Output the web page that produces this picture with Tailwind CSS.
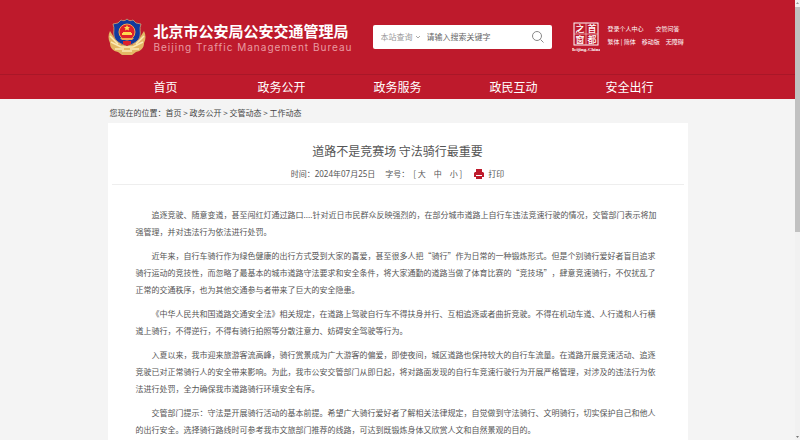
<!DOCTYPE html>
<html lang="zh-CN">
<head>
  <meta charset="UTF-8" />
  <meta name="viewport" content="width=device-width, initial-scale=1.0"/>
  <title>道路不是竞赛场 守法骑行最重要</title>
  <script src="https://cdn.jsdelivr.net/npm/@tailwindcss/browser@4"></script>
</head>
<body class="flex h-screen overflow-hidden bg-[#f4f4f4] font-['Noto_Sans_CJK_SC',sans-serif] text-[8px] text-[#555] [text-spacing-trim:space-all]">

  <div class="h-full min-w-0 flex-1 overflow-hidden">
    <header class="bg-[#be1a2c] text-white">
      <div class="mx-auto flex h-[74px] max-w-[580px] items-center">
        <a href="#" class="flex items-center gap-2" aria-label="北京市公安局公安交通管理局">
          <svg class="h-[38px] w-[38px]" viewBox="0 0 38 38">
            <path d="M2 13c-2 4-2 8 0 12 0 5 3 8 8 9l4 3h10l4-3c5-1 8-4 8-9 2-4 2-8 0-12l-5 8-7 6H14l-7-6z" fill="#e3b865"/>
            <path d="M2 18l8 8M3 24l10 5M7 31l9 0M36 18l-8 8M35 24l-10 5M31 31l-9 0" stroke="#fbe9b4" stroke-width="1.5" fill="none"/>
            <path d="M19 1c2 2 4 2 6 1l3 3 5 1c-2 5 0 8-1 12-1 5-6 8-13 10C12 26 7 23 6 18c-1-4 1-7-1-12l5-1 3-3c2 1 4 1 6-1z" fill="#123a9e" stroke="#d9b87a" stroke-width=".7"/>
            <circle cx="19" cy="14" r="8" fill="#e0202a" stroke="#f0a850"/>
            <path d="M19 7l1 2h2l-1.500 1.500.5 2-2-1-2 1 .5-2L16 9h2z" fill="#ffd94f"/>
            <path d="M15 14h8v1h1v2H14v-2h1z" fill="#ffd94f"/>
            <path d="M12 20h14l-2 2H14z" fill="#f0a850"/>
            <path d="M15 23h8v3l-4 2-4-2z" fill="#e0202a"/>
            <path d="M13 29h12M14 33h10" stroke="#fbe9b4" stroke-width="1.500"/>
          </svg>
          <span class="block whitespace-nowrap">
            <span class="block text-[15px] leading-5 font-bold">北京市公安局公安交通管理局</span>
            <span class="block font-['Inter',sans-serif] text-[10px] leading-3 tracking-[1px] text-[#e99ba2]">Beijing Traffic Management Bureau</span>
          </span>
        </a>

        <form class="mr-5 ml-auto flex h-6 w-[179px] items-center rounded-xs bg-white px-2 text-[#999]">
          <select aria-label="查询范围" class="h-4 w-9 appearance-none text-[8px]"><option>本站查询</option></select>
          <svg class="-ml-0.5 h-1 w-1.5" viewBox="0 0 6 4" fill="none" stroke="#aaa"><path d="M1 1l2 2 2-2"/></svg>
          <input type="text" aria-label="关键字" placeholder="请输入搜索关键字" class="ml-1.5 min-w-0 flex-1 text-[8px] text-[#666] placeholder:text-[#666]"/>
          <button type="button" aria-label="搜索">
            <svg class="size-3" viewBox="0 0 12 12" fill="none" stroke="#888"><circle cx="5" cy="5" r="4.500"/><path d="M8.500 8.500l3 3"/></svg>
          </button>
        </form>

        <a href="#" class="block" aria-label="首都之窗">
          <svg class="h-[30px] w-7" viewBox="0 0 28 30">
            <rect x="2" y="1" width="24" height="22" fill="none" stroke="#fff"/>
            <path d="M14 1v22M2 12h24" stroke="#f3c3c7" stroke-width=".7"/>
            <g fill="#fff" font-family="Noto Sans CJK SC" font-size="9" font-weight="500" text-anchor="middle">
              <text x="8" y="10">之</text><text x="20" y="10">首</text>
              <text x="8" y="21">窗</text><text x="20" y="21">都</text>
            </g>
            <text x="14" y="28.500" fill="#fff" font-family="Liberation Serif" font-size="5" font-weight="700" text-anchor="middle">Beijing-China</text>
          </svg>
        </a>

        <div class="mr-1 ml-2 w-[76px] pb-1 text-[6px] leading-[13px] whitespace-nowrap">
          <div class="flex gap-3"><a href="#">登录个人中心</a><a href="#">交管问答</a></div>
          <div class="flex gap-1.5"><span><a href="#">繁体</a> | <a href="#">简体</a></span><a href="#">移动版</a><a href="#">无障碍</a></div>
        </div>
      </div>
      <nav class="border-t border-[#a91728]">
        <div class="mx-auto grid h-6 max-w-[580px] grid-cols-5 items-center text-center text-xs">
          <a href="#">首页</a>
          <a href="#">政务公开</a>
          <a href="#">政务服务</a>
          <a href="#">政民互动</a>
          <a href="#">安全出行</a>
        </div>
      </nav>
    </header>

    <main class="mx-auto max-w-[580px]">
      <div class="px-0.5 pt-2 pb-1 leading-3 text-[#444]">
        您现在的位置：<a href="#">首页</a> &gt; <a href="#">政务公开</a> &gt; <a href="#">交管动态</a> &gt; <a href="#">工作动态</a>
      </div>

      <article class="h-screen bg-white px-1 pt-5">
        <h1 class="text-center text-xs leading-4">道路不是竞赛场 守法骑行最重要</h1>
        <div class="flex h-[26px] items-center justify-center border-b border-[#eee] pt-1">
          <span class="font-['Noto_Sans','Noto_Sans_CJK_SC',sans-serif]">时间：2024年07月25日</span>
          <span class="ml-2.5">字号：</span>
          <span class="ml-1 flex gap-2">
            <span>[ <button type="button">大</button></span>
            <button type="button">中</button>
            <span><button type="button">小</button> ]</span>
          </span>
          <a href="#" class="ml-3 flex items-center gap-1">
            <svg class="size-2.5" viewBox="0 0 10 10" fill="#be1a2c"><path d="M2 0h6v3H2zM1 3h8l1 1v4H8V6H2v2H0V4zM2 7h6v3H2z"/></svg>
            打印
          </a>
        </div>

        <div class="space-y-[7px] px-6 pt-[21px] leading-[17px]">
          <p class="indent-4">追逐竞驶、随意变道，甚至闯红灯通过路口....针对近日市民群众反映强烈的，在部分城市道路上自行车违法竞速行驶的情况，交管部门表示将加强管理，并对违法行为依法进行处罚。</p>
          <p class="indent-4">近年来，自行车骑行作为绿色健康的出行方式受到大家的喜爱，甚至很多人把“骑行”作为日常的一种锻炼形式。但是个别骑行爱好者盲目追求骑行运动的竞技性，而忽略了最基本的城市道路守法要求和安全条件，将大家通勤的道路当做了体育比赛的“竞技场”，肆意竞速骑行，不仅扰乱了正常的交通秩序，也为其他交通参与者带来了巨大的安全隐患。</p>
          <p class="indent-4">《中华人民共和国道路交通安全法》相关规定，在道路上驾驶自行车不得扶身并行、互相追逐或者曲折竞驶。不得在机动车道、人行道和人行横道上骑行，不得逆行，不得有骑行拍照等分散注意力、妨碍安全驾驶等行为。</p>
          <p class="indent-4">入夏以来，我市迎来旅游客流高峰，骑行赏景成为广大游客的偏爱，即使夜间，城区道路也保持较大的自行车流量。在道路开展竞速活动、追逐竞驶已对正常骑行人的安全带来影响。为此，我市公安交管部门从即日起，将对路面发现的自行车竞速行驶行为开展严格管理，对涉及的违法行为依法进行处罚，全力确保我市道路骑行环境安全有序。</p>
          <p class="indent-4">交管部门提示：守法是开展骑行活动的基本前提。希望广大骑行爱好者了解相关法律规定，自觉做到守法骑行、文明骑行，切实保护自己和他人的出行安全。选择骑行路线时可参考我市文旅部门推荐的线路，可达到既锻炼身体又欣赏人文和自然景观的目的。</p>
        </div>
      </article>
    </main>
  </div>

  <div class="flex h-full w-[5px] shrink-0 flex-col bg-[#f1f1f1]">
    <svg class="h-[7px] w-[5px]" viewBox="0 0 5 7" fill="#999"><path d="M1 4l1.500-2L4 4z"/></svg>
    <div class="h-[225px] bg-[#c1c1c1]"></div>
    <svg class="mt-auto h-[7px] w-[5px]" viewBox="0 0 5 7" fill="#777"><path d="M1 3h3L2.500 5z"/></svg>
  </div>

</body>
</html>
